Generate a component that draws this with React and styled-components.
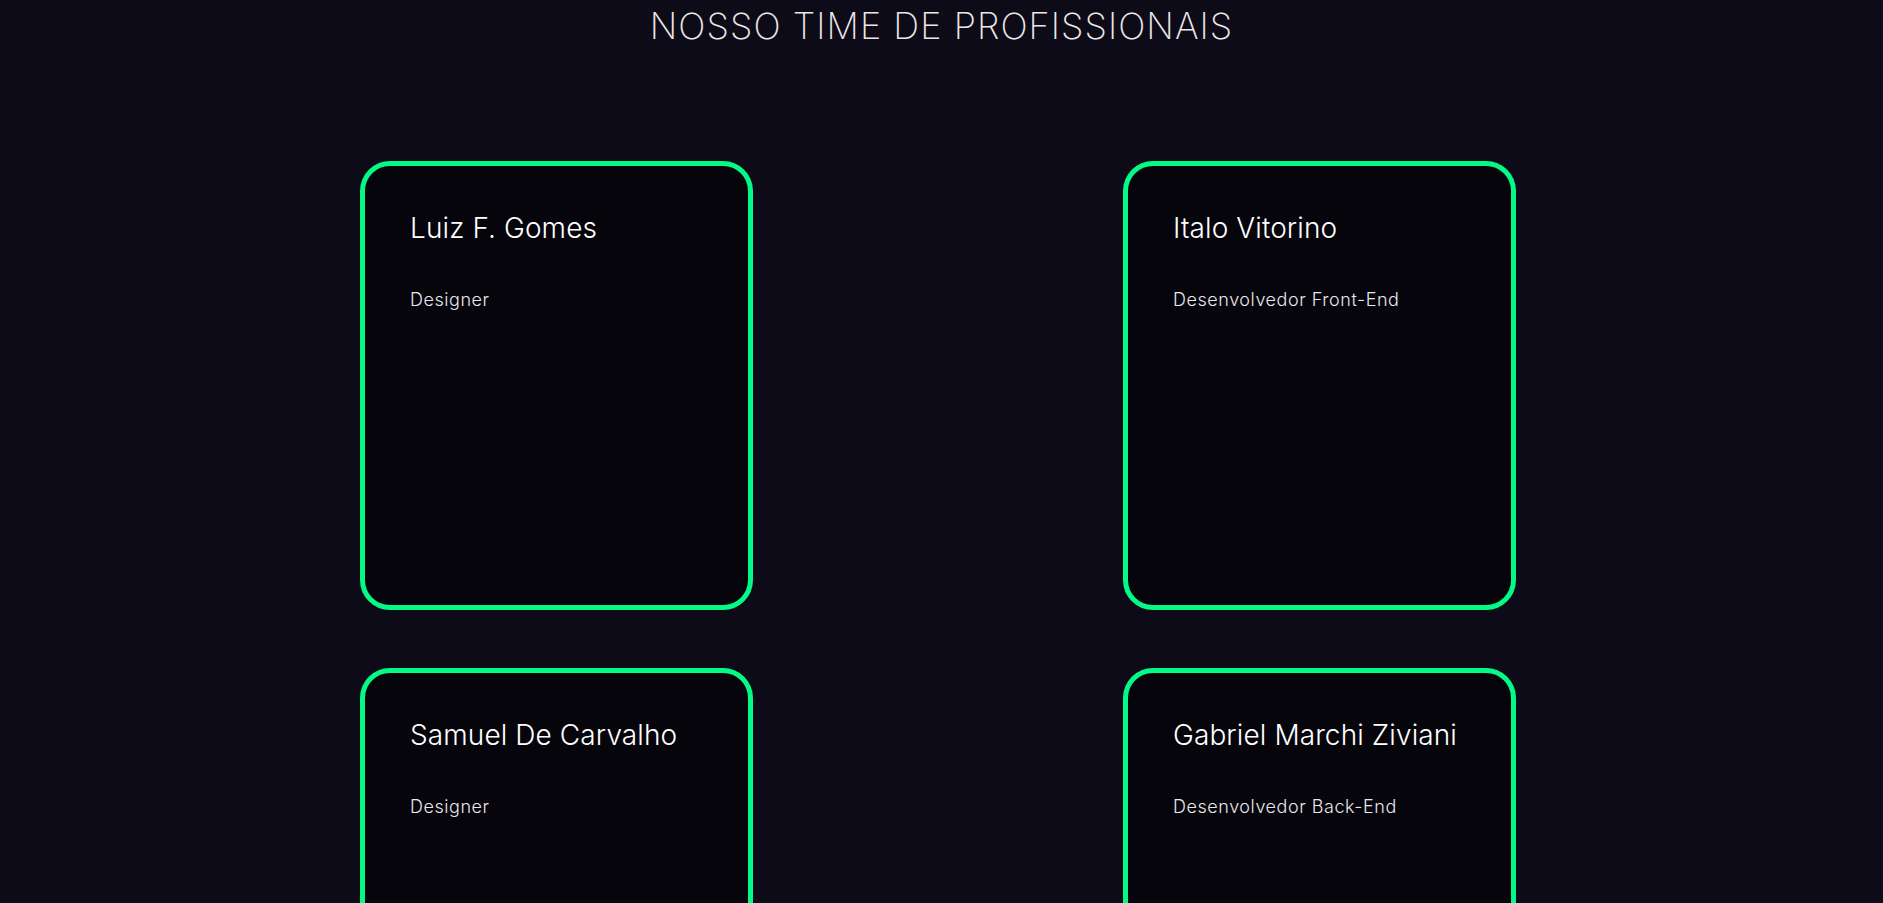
import React from 'react'
import styled, { createGlobalStyle } from 'styled-components'

const GlobalStyle = createGlobalStyle`
  body {
    margin: 0;
    background: #0d0b17;
    font-family: Inter, "Noto Sans", sans-serif;
  }
`;

const Page = styled.div`
  min-height: 100vh;
  padding-top: 5px;
  padding-bottom: 60px;
  background: #0d0b17;
`;

const Title = styled.h1`
  margin: 0;
  text-align: center;
  font-size: 36px;
  font-weight: 250;
  letter-spacing: 1.05px;
  color: #ede7e7;
  line-height: 1.21;
`;

const Grid = styled.div`
  display: grid;
  grid-template-columns: repeat(2, 393px);
  column-gap: 370px;
  row-gap: 58px;
  padding-left: 360px;
  margin-top: 112px;
`;

const Card = styled.div`
  box-sizing: border-box;
  height: 449px;
  border: 5px solid #03fa86;
  border-radius: 30px;
  background: #06050c;
  padding: 46px 40px 0 45px;
  display: flex;
  flex-direction: column;
  gap: 44px;
`;

const Name = styled.div`
  font-size: 28px;
  font-weight: 300;
  color: #ffffff;
  letter-spacing: 0.1px;
  line-height: 1.21;
`;

const Role = styled.div`
  font-size: 18px;
  font-weight: 300;
  color: #e8e8ec;
  letter-spacing: 0.55px;
  line-height: 1.21;
`;

const team = [
  { name: 'Luiz F. Gomes', role: 'Designer' },
  { name: 'Italo Vitorino', role: 'Desenvolvedor Front-End' },
  { name: 'Samuel De Carvalho', role: 'Designer' },
  { name: 'Gabriel Marchi Ziviani', role: 'Desenvolvedor Back-End' },
];

const App = () => {
  return (
    <>
      <GlobalStyle />
      <Page>
        <Title>NOSSO TIME DE PROFISSIONAIS</Title>
        <Grid>
          {team.map((member, index) => (
            <Card key={index}>
              <Name>{member.name}</Name>
              <Role>{member.role}</Role>
            </Card>
          ))}
        </Grid>
      </Page>
    </>
  )
}

export default App
